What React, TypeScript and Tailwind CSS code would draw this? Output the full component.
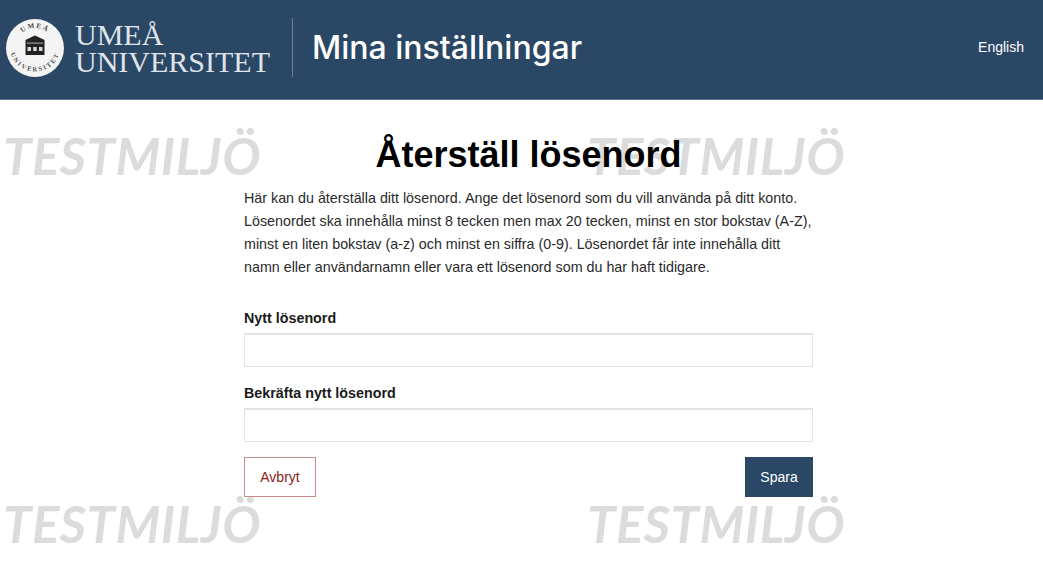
const sans = { fontFamily: '"Liberation Sans", Arial, sans-serif' };

function Seal() {
  return (
    <svg width="60" height="60" viewBox="0 0 60 60" className="shrink-0 mt-[-3px]">
      <circle cx="30" cy="30" r="29" fill="#f4f4f4" />
      <defs>
        <path id="sealTop" d="M10 30 A20 20 0 0 1 50 30" />
        <path id="sealBottom" d="M4.5 28 A25.5 25.5 0 0 0 55.5 28" />
      </defs>
      <text fontFamily="Liberation Serif, serif" fontSize="7" fontWeight="700" fill="#444" letterSpacing="1.6">
        <textPath href="#sealTop" startOffset="50%" textAnchor="middle">UMEÅ</textPath>
      </text>
      <text fontFamily="Liberation Serif, serif" fontSize="6.5" fontWeight="700" fill="#555" letterSpacing="1.8">
        <textPath href="#sealBottom" startOffset="50%" textAnchor="middle">UNIVERSITET</textPath>
      </text>
      <path d="M20.5 22 L30 17.5 L39.5 22 V37 H20.5 Z" fill="#222222" />
      <rect x="22" y="24.5" width="16" height="1.2" fill="#9a9a9a" />
      <path d="M22.5 29h3.5v4h-3.5zM28.2 29h3.5v4h-3.5zM34 29h3.5v4h-3.5z" fill="#d8d8d8" />
    </svg>
  );
}

function Watermark({ className }: { className: string }) {
  return (
    <div
      className={`absolute text-[51px] leading-none font-bold italic text-[#dcdcdc] tracking-[0.5px] whitespace-nowrap select-none ${className}`}
      style={{ fontFamily: 'Lato, "Open Sans", sans-serif' }}
    >
      TESTMILJÖ
    </div>
  );
}

function Field({ label }: { label: string }) {
  return (
    <div className="flex flex-col">
      <label className="text-[14.3px] leading-[20px] font-bold text-[#1a1a1a] mb-[5px]">{label}</label>
      <input type="password" className="h-[34px] w-full border border-t-2 border-[#e3e3e3] bg-white" />
    </div>
  );
}

export default function App() {
  return (
    <div className="relative h-[578px] w-[1043px] overflow-hidden bg-white" style={sans}>
      <header className="flex h-[100px] items-center justify-between bg-[#2a4765] pl-[5px] pr-[19px] border-b border-[#5d7690]">
        <div className="flex items-center">
          <Seal />
          <div
            className="ml-[10px] flex flex-col text-[30px] leading-[27px] text-[#dfe4ea] mt-[-3px]"
            style={{ fontFamily: '"Liberation Serif", serif' }}
          >
            <span>UMEÅ</span>
            <span>UNIVERSITET</span>
          </div>
          <div className="ml-[22px] h-[59px] w-px bg-[#6b8199] mt-[-4px]" />
          <div
            className="ml-[19px] text-[32px] font-medium text-white mt-[-3px]"
            style={{ fontFamily: 'Inter, sans-serif' }}
          >
            Mina inställningar
          </div>
        </div>
        <a className="text-[14px] text-white mb-[5px]">English</a>
      </header>

      <Watermark className="left-[3px] top-[130px]" />
      <Watermark className="left-[587px] top-[130px]" />
      <Watermark className="left-[3px] top-[498px]" />
      <Watermark className="left-[587px] top-[498px]" />

      <main className="relative ml-[244px] w-[569px]">
        <h1 className="mt-[33px] text-center text-[36px] leading-[44px] font-bold text-black">Återställ lösenord</h1>
        <p className="mt-[10px] text-[14.3px] leading-[23px] text-[#2a2a2a] whitespace-nowrap">
          Här kan du återställa ditt lösenord. Ange det lösenord som du vill använda på ditt konto.<br />
          Lösenordet ska innehålla minst 8 tecken men max 20 tecken, minst en stor bokstav (A-Z),<br />
          minst en liten bokstav (a-z) och minst en siffra (0-9). Lösenordet får inte innehålla ditt<br />
          namn eller användarnamn eller vara ett lösenord som du har haft tidigare.
        </p>
        <form className="mt-[29px] flex flex-col gap-[16px]">
          <Field label="Nytt lösenord" />
          <Field label="Bekräfta nytt lösenord" />
        </form>
        <div className="mt-[15px] flex justify-between">
          <button className="h-[40px] w-[72px] border border-[#c98a8a] bg-white text-[14px] text-[#8c1c1c]">Avbryt</button>
          <button className="h-[40px] w-[68px] bg-[#2a4765] text-[14px] text-white">Spara</button>
        </div>
      </main>
    </div>
  );
}
